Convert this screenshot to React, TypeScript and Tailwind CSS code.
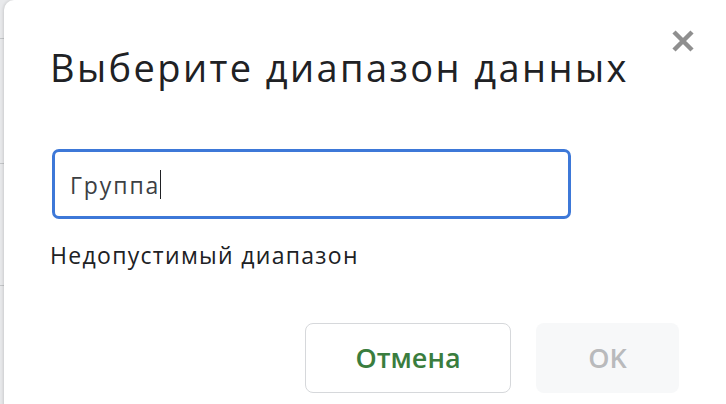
import React from "react";

export default function App() {
  return (
    <div className="w-[726px] h-[404px] overflow-hidden bg-[#e8e9eb] flex font-['Open_Sans',sans-serif]">
      <div className="w-[4px] shrink-0 flex flex-col">
        <div className="h-[38px]" />
        <div className="h-px bg-[#c4c6c8]" />
        <div className="h-[124px]" />
        <div className="h-px bg-[#c4c6c8]" />
        <div className="h-[121px]" />
        <div className="h-px bg-[#c4c6c8]" />
      </div>
      <div className="flex-1 h-[440px] bg-white rounded-tl-[10px] shadow-[-1px_0_3px_rgba(0,0,0,0.12)] relative pl-[48px] pt-[45px]">
        <button className="absolute left-[667px] top-[29px] w-[24px] h-[24px] flex items-center justify-center">
          <svg width="24" height="24" viewBox="0 0 24 24" fill="none">
            <path d="M3 3L21 21M21 3L3 21" stroke="#8f8f8f" strokeWidth="4.5" strokeLinecap="butt" />
          </svg>
        </button>
        <h1 className="-ml-[2px] text-[38px] leading-[44px] tracking-[2.4px] text-[#202124] font-normal">Выберите диапазон данных</h1>
        <div className="mt-[60px] w-[519px] h-[70px] border-[3px] border-[#3d78d8] rounded-[7px] flex items-center pl-[15px] pt-[1px]">
          <span className="text-[23px] leading-[28px] tracking-[1.9px] text-[#3c4043]">Группа</span>
          <span className="w-px h-[29px] bg-[#202124]" />
        </div>
        <div className="mt-[22px] -ml-[2px] text-[23px] leading-[28px] tracking-[1.3px] text-[#202124]">Недопустимый диапазон</div>
        <div className="mt-[54px] flex gap-[25px] pl-[253px]">
          <button className="w-[206px] h-[70px] border border-[#d6d8db] rounded-[8px] bg-white text-[#3a7d3e] text-[27px] font-semibold">Отмена</button>
          <button className="w-[143px] h-[70px] rounded-[8px] bg-[#f7f8f9] text-[#b9babc] text-[27px] font-semibold">OK</button>
        </div>
      </div>
    </div>
  );
}
